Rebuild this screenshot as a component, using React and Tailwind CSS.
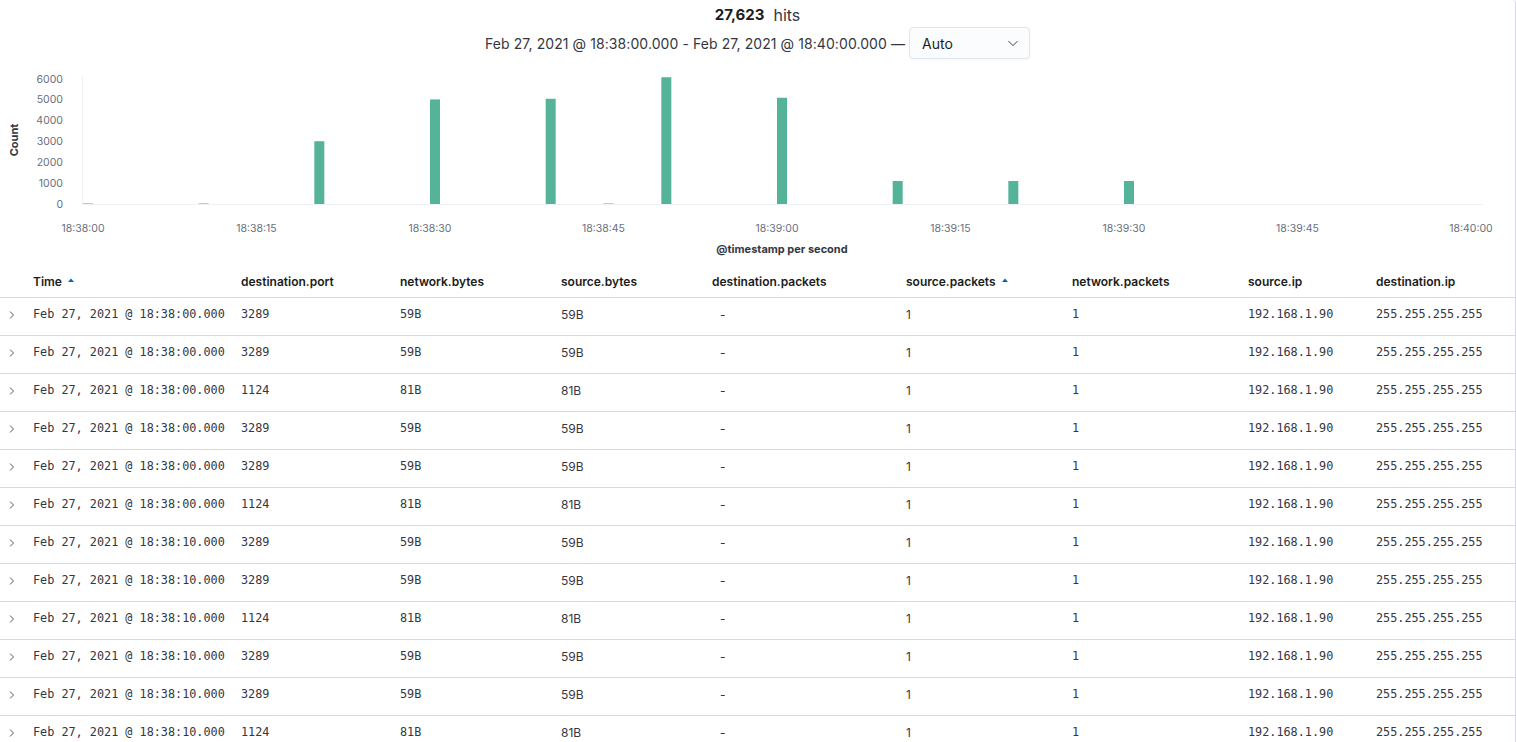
import React from "react";

const bars = [
  { s: 0, v: 12 }, { s: 10, v: 14 }, { s: 20, v: 3000 }, { s: 30, v: 5000 },
  { s: 40, v: 5030 }, { s: 45, v: 10 }, { s: 50, v: 6060 }, { s: 60, v: 5080 },
  { s: 70, v: 1100 }, { s: 80, v: 1100 }, { s: 90, v: 1100 },
];

const ticks = ["18:38:00", "18:38:15", "18:38:30", "18:38:45", "18:39:00", "18:39:15", "18:39:30", "18:39:45", "18:40:00"];

const cols = [
  { key: "time", label: "Time", w: "w-[208px]", sort: true, mono: true },
  { key: "port", label: "destination.port", w: "w-[159px]", mono: true },
  { key: "nb", label: "network.bytes", w: "w-[161px]", mono: true },
  { key: "sb", label: "source.bytes", w: "w-[151px]" },
  { key: "dp", label: "destination.packets", w: "w-[194px]", pad: true },
  { key: "sp", label: "source.packets", w: "w-[166px]", sort: true },
  { key: "np", label: "network.packets", w: "w-[176px]", mono: true },
  { key: "sip", label: "source.ip", w: "w-[128px]", mono: true },
  { key: "dip", label: "destination.ip", w: "flex-1", mono: true },
];

const kinds = [
  ["3289", "59B"], ["3289", "59B"], ["1124", "81B"],
  ["3289", "59B"], ["3289", "59B"], ["1124", "81B"],
];

const rows = [...kinds.map((k) => ["00", ...k]), ...kinds.map((k) => ["10", ...k])].map(([sec, port, b]) => ({
  time: `Feb 27, 2021 @ 18:38:${sec}.000`,
  port, nb: b, sb: b, dp: "-", sp: "1", np: "1",
  sip: "192.168.1.90", dip: "255.255.255.255",
}));

function SortUp() {
  return (
    <svg width="8" height="6" viewBox="0 0 8 6" className="ml-[5px] mb-[3px]">
      <path d="M1 5 L4 1.5 L7 5 Z" fill="#006bb4" />
    </svg>
  );
}

function Chart() {
  const x0 = 83, pxs = 173.5 / 15, base = 142, k = 125.5 / 6000;
  return (
    <svg width="1516" height="201" className="block mt-[3px]">
      {[0, 1000, 2000, 3000, 4000, 5000, 6000].map((v) => (
        <text key={v} x="63" y={base - v * k + 4} textAnchor="end" fontSize="10.5" fill="#69707d" fontFamily="Inter, sans-serif">{v}</text>
      ))}
      <text transform="translate(18 78) rotate(-90)" textAnchor="middle" fontSize="11" fontWeight="700" fill="#343741" fontFamily="Inter, sans-serif">Count</text>
      <line x1="82.5" y1="14" x2="82.5" y2={base} stroke="#eef0f3" />
      <line x1="82" y1={base + 0.5} x2="1483" y2={base + 0.5} stroke="#eef0f3" />
      {bars.map((b) => {
        const h = Math.max(b.v * k, 1);
        const small = b.v < 100;
        return (
          <rect key={b.s} x={x0 + b.s * pxs} y={base - h} width="10" height={h} fill={small ? "#a9d9cb" : "#54b399"} />
        );
      })}
      {ticks.map((t, i) => (
        <text key={t} x={x0 + i * 173.5} y="170" textAnchor="middle" fontSize="10.5" fill="#69707d" fontFamily="Inter, sans-serif">{t}</text>
      ))}
      <text x="782" y="191" textAnchor="middle" fontSize="11" fontWeight="700" fill="#343741" fontFamily="Inter, sans-serif">@timestamp per second</text>
    </svg>
  );
}

export default function App() {
  return (
    <div className="w-[1516px] h-[742px] overflow-hidden bg-white border-r border-[#d3dae6] rounded-tr-[4px] text-[#343741]" style={{ fontFamily: "Inter, 'Noto Sans', sans-serif" }}>
      <div className="flex flex-col items-center pt-[4px]">
        <div className="h-[21px] flex items-center gap-[9px] leading-none">
          <span className="text-[15px] font-bold text-[#1a1c21]">27,623</span>
          <span className="text-[16px] text-[#343741]">hits</span>
        </div>
        <div className="mt-[2px] flex items-center text-[14px] text-[#343741]">
          <span className="tracking-[0.08px]">Feb 27, 2021 @ 18:38:00.000 - Feb 27, 2021 @ 18:40:00.000 —</span>
          <div className="ml-[4px] w-[121px] h-[32px] flex items-center justify-between pl-[12px] pr-[10px] bg-[#fbfcfd] border border-[#e0e5ee] rounded-[4px] shadow-[0_1px_2px_rgba(0,0,0,0.04)] text-[#1a1c21]">
            <span>Auto</span>
            <svg width="12" height="12" viewBox="0 0 16 16" fill="none" stroke="#343741" strokeWidth="1.3">
              <path d="M2 5.5 L8 11.5 L14 5.5" />
            </svg>
          </div>
        </div>
      </div>

      <Chart />

      <div className="text-[12px]">
        <div className="flex h-[35px] items-center border-b border-[#d3dae6] pl-[33px] pt-[3px] font-semibold text-[#1a1c21]">
          {cols.map((c) => (
            <div key={c.key} className={`${c.w} flex items-center`}>
              <span>{c.label}</span>
              {c.sort && <SortUp />}
            </div>
          ))}
        </div>
        {rows.map((r, i) => (
          <div key={i} className="flex h-[38px] items-center pb-[3px] border-b border-[#d3dae6]">
            <div className="w-[33px] flex pl-[8px]">
              <svg width="8" height="10" viewBox="0 0 8 10" fill="none" stroke="#535966" strokeWidth="1">
                <path d="M2 1.5 L5.5 5 L2 8.5" />
              </svg>
            </div>
            {cols.map((c) => (
              <div key={c.key} className={`${c.w} ${c.pad ? "pl-[8px]" : ""} ${c.mono ? "text-[11.8px]" : "text-[12px]"}`}
                style={c.mono ? { fontFamily: "'DejaVu Sans Mono', 'Liberation Mono', monospace" } : undefined}>
                {r[c.key]}
              </div>
            ))}
          </div>
        ))}
      </div>
    </div>
  );
}
